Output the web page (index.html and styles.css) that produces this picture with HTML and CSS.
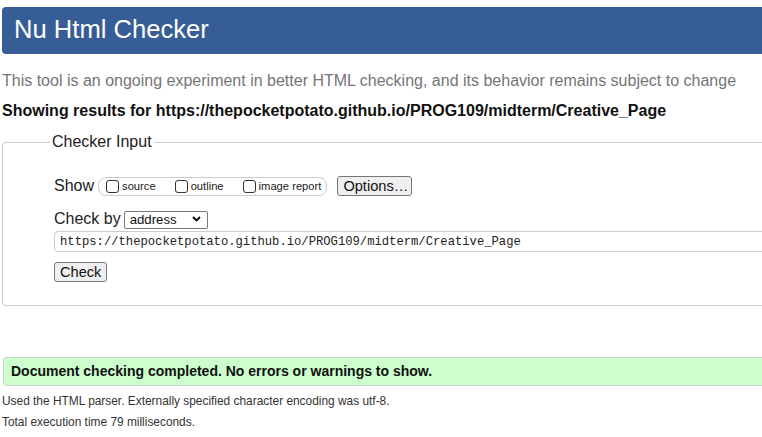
FILE: index.html
```html
<!DOCTYPE html>
<html lang="en">
<head>
<meta charset="utf-8">
<title>Showing results for https://thepocketpotato.github.io/PROG109/midterm/Creative_Page - Nu Html Checker</title>
<link rel="stylesheet" href="styles.css">
</head>
<body>
<div class="page">
  <h1 class="title">Nu Html Checker</h1>
  <p class="about">This tool is an ongoing experiment in better HTML checking, and its behavior remains subject to change</p>
  <p class="showing">Showing results for https://thepocketpotato.github.io/PROG109/midterm/Creative_Page</p>
  <form class="form">
    <fieldset class="fieldset">
      <legend class="legend">Checker Input</legend>
      <div class="row row-show">
        <span class="label">Show</span>
        <span class="group">
          <label class="opt"><input type="checkbox" class="cb"><span>source</span></label>
          <label class="opt"><input type="checkbox" class="cb"><span>outline</span></label>
          <label class="opt opt-last"><input type="checkbox" class="cb"><span>image report</span></label>
        </span>
        <button type="button" class="btn btn-options">Options…</button>
      </div>
      <div class="row row-by">
        <span class="label label-by">Check by</span>
        <span class="select-wrap">
          <select class="select"><option>address</option></select>
          <svg class="chev" width="9" height="6" viewBox="0 0 9 6"><path d="M1 1 L4.5 4.5 L8 1" fill="none" stroke="#000" stroke-width="1.8"/></svg>
        </span>
      </div>
      <input class="url" type="text" value="https://thepocketpotato.github.io/PROG109/midterm/Creative_Page">
      <button type="button" class="btn btn-check">Check</button>
    </fieldset>
  </form>
  <p class="success">Document checking completed. No errors or warnings to show.</p>
  <div class="details">
    <p class="detail">Used the HTML parser. Externally specified character encoding was utf-8.</p>
    <p class="detail">Total execution time 79 milliseconds.</p>
  </div>
</div>
</body>
</html>
```

FILE: styles.css
```css
html, body {
  margin: 0;
  padding: 0;
  overflow: hidden;
  background: #fff;
}
body {
  font-family: "Liberation Sans", Arial, sans-serif;
  color: #222;
}
.page {
  width: 820px;
  padding-left: 2px;
}
.title {
  margin: 7px 0 0 0;
  padding: 0 0 3px 12px;
  height: 44px;
  line-height: 44px;
  font-size: 25.6px;
  font-weight: normal;
  color: #fff;
  background: #365d95;
  border-radius: 4px 0 0 4px;
}
.about {
  margin: 16px 0 0 0;
  font-size: 16px;
  line-height: 22px;
  color: #757575;
}
.showing {
  margin: 8px 0 0 0;
  font-size: 16px;
  line-height: 22px;
  font-weight: bold;
  color: #111;
}
.form {
  margin: 9px 0 0 0;
}
.fieldset {
  margin: 0;
  padding: 23px 10px 23px 51px;
  border: 1px solid #ccc;
  border-radius: 4px 0 0 4px;
}
.legend {
  padding: 0 2px;
  margin-left: -4px;
  font-size: 16px;
  line-height: 22px;
  color: #222;
}
.row {
  display: flex;
  align-items: center;
}
.row-show {
  height: 20px;
}
.label {
  font-size: 16px;
  color: #222;
}
.group {
  display: flex;
  align-items: center;
  margin-left: 4px;
  height: 17px;
  padding: 0 5px 0 7px;
  border: 1px solid #ccc;
  border-radius: 8px;
}
.opt {
  display: flex;
  align-items: center;
  font-size: 11.2px;
  color: #222;
  margin-right: 19px;
}
.opt-last {
  margin-right: 0;
}
.cb {
  -webkit-appearance: none;
  appearance: none;
  width: 13px;
  height: 13px;
  margin: 0 3px 0 0;
  border: 1px solid #333;
  border-radius: 3px;
  background: #fff;
  box-sizing: border-box;
}
.btn {
  font-family: "Liberation Sans", Arial, sans-serif;
  font-size: 14.6px;
  color: #111;
  background: #efefef;
  border: 1px solid #767676;
  border-radius: 3px;
  height: 20px;
  padding: 0 5px;
  box-sizing: border-box;
  line-height: 18px;
}
.btn-options {
  margin-left: 10px;
  width: 75px;
}
.row-by {
  margin-top: 14px;
  height: 18px;
}
.label-by {
  margin-right: 3px;
}
.select-wrap {
  position: relative;
  display: inline-block;
  height: 18px;
}
.select {
  -webkit-appearance: none;
  appearance: none;
  width: 84px;
  height: 18px;
  margin: 0;
  padding: 0 0 0 5px;
  font-family: "Liberation Sans", Arial, sans-serif;
  font-size: 13.2px;
  color: #111;
  background: #fff;
  border: 1px solid #767676;
  border-radius: 2px;
  box-sizing: border-box;
}
.chev {
  position: absolute;
  right: 7px;
  top: 6px;
}
.url {
  display: block;
  margin: 3px 0 0 0;
  width: 760px;
  height: 21px;
  padding: 0 5px;
  box-sizing: border-box;
  border: 1px solid #ccc;
  border-radius: 4px 0 0 4px;
  font-family: "Liberation Mono", "DejaVu Sans Mono", monospace;
  font-size: 12.2px;
  color: #222;
  outline: none;
}
.btn-check {
  display: block;
  margin-top: 10px;
  width: 53px;
}
.success {
  margin: 51px 0 0 1px;
  height: 27px;
  line-height: 27px;
  padding-left: 7px;
  font-size: 14px;
  font-weight: bold;
  color: #111;
  background: #ccffcc;
  border: 1px solid #c8d8c8;
  border-radius: 3px 0 0 3px;
}
.details {
  margin-top: 5px;
}
.detail {
  margin: 0;
  font-size: 11.9px;
  line-height: 21px;
  color: #333;
}
```
